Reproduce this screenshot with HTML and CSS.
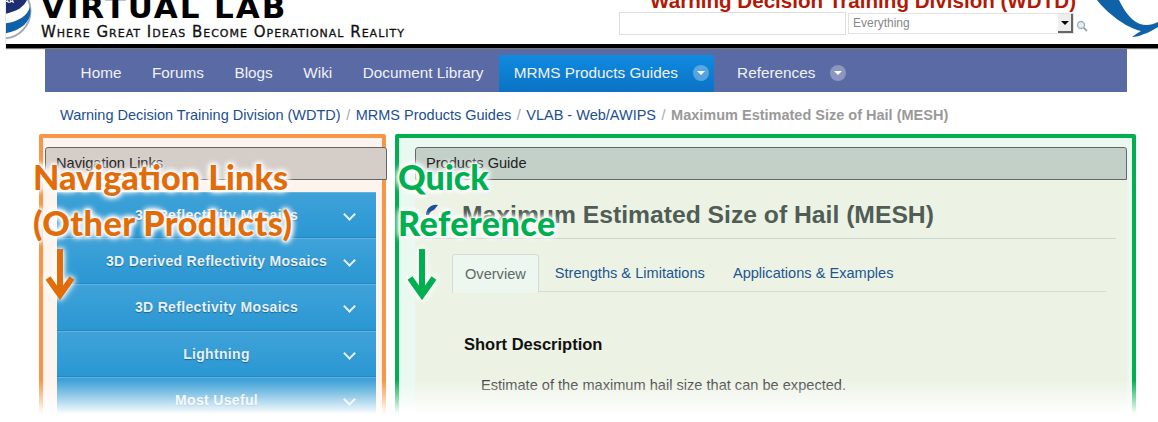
FILE: index.html
```html
<!DOCTYPE html>
<html lang="en">
<head>
    <meta charset="UTF-8">
    <title>Maximum Estimated Size of Hail (MESH)</title>
    <link rel="stylesheet" href="styles.css">
</head>
<body>

    <header class="top">
        <div class="brand">
            <svg class="noaa" width="28" height="44" viewBox="0 0 28 44">
                <circle cx="-3" cy="11" r="27.5" fill="#fff" stroke="#a3adb8" stroke-width="2"/>
                <path d="M-6 0 H21 C17 8 10 12 -6 15 Z" fill="#1d2f73"/>
                <path d="M24 7 C27 20 16 32 -6 34 L-6 24 C10 23 21 17 24 7 Z" fill="#0f62a8"/>
                <text class="noaa-text" x="-2" y="3">AA</text>
            </svg>
            <div class="brand-text">
                <div class="brand-name">VIRTUAL LAB</div>
                <div class="brand-tag">Where great ideas become operational reality</div>
            </div>
        </div>
        <div class="org">
            <div class="org-name">Warning Decision Training Division (WDTD)</div>
            <div class="search">
                <input class="search-box" type="text">
                <div class="search-select">
                    <span>Everything</span>
                    <i class="select-btn"></i>
                </div>
                <svg class="search-icon" width="12" height="12" viewBox="0 0 12 12">
                    <circle cx="5" cy="5" r="3.5" fill="#e4edf2" stroke="#9fb2bd" stroke-width="1.3"/>
                    <path d="M7.6 7.6 L11 11" stroke="#9aa5ab" stroke-width="1.8"/>
                </svg>
            </div>
        </div>
        <svg class="bird" width="62" height="44" viewBox="0 0 62 44">
            <path d="M1 0 H23 C28 10 34 20 44 24 C50 26 56 25 62 22 V27 C57 30 52 33 48 34 C44 36 40 37 36 37 C40 34 43 32 45 31 C30 28 10 12 1 0 Z" fill="#0f62a8"/>
        </svg>
    </header>

    <nav class="nav">
        <a href="#">Home</a>
        <a href="#">Forums</a>
        <a href="#">Blogs</a>
        <a href="#">Wiki</a>
        <a href="#">Document Library</a>
        <a href="#" class="active">MRMS Products Guides <i class="caret"></i></a>
        <a href="#">References <i class="caret"></i></a>
    </nav>

    <div class="crumbs">
        <a href="#">Warning Decision Training Division (WDTD)</a><span>/</span><a href="#">MRMS Products Guides</a><span>/</span><a href="#">VLAB - Web/AWIPS</a><span>/</span><b>Maximum Estimated Size of Hail (MESH)</b>
    </div>

    <div class="columns">
        <section class="box box-orange">
            <div class="portlet-title title-nav">Navigation Links</div>
            <ul class="menu">
                <li>3D Reflectivity Mosaics</li>
                <li>3D Derived Reflectivity Mosaics</li>
                <li>3D Reflectivity Mosaics</li>
                <li>Lightning</li>
                <li>Most Useful</li>
            </ul>
            <div class="callout callout-orange">
                <div class="callout-text">Navigation Links<br><span class="callout-wide">(Other Products)</span></div>
                <svg class="callout-arrow" width="30" height="52" viewBox="0 0 30 52">
                    <path d="M15 1 V46 M3 30 L15 47 L27 30" fill="none" stroke="#e36c0a" stroke-width="6"/>
                </svg>
            </div>
        </section>

        <section class="box box-green">
            <div class="portlet-title title-guide">Products Guide</div>
            <div class="guide">
                <h1 class="guide-title">
                    <svg class="guide-icon" width="24" height="24" viewBox="0 0 24 24">
                        <path d="M2 12 A10 10 0 0 1 14 2 L10 7 A7 7 0 0 0 5 12 Z" fill="#1d4f96"/>
                    </svg>
                    Maximum Estimated Size of Hail (MESH)
                </h1>
                <div class="tabs">
                    <a href="#" class="tab-on">Overview</a>
                    <a href="#">Strengths &amp; Limitations</a>
                    <a href="#">Applications &amp; Examples</a>
                </div>
                <h2 class="short-head">Short Description</h2>
                <p class="short-text">Estimate of the maximum hail size that can be expected.</p>
            </div>
            <div class="callout callout-green">
                <div class="callout-text">Quick<br><span class="callout-wide">Reference</span></div>
                <svg class="callout-arrow" width="30" height="52" viewBox="0 0 30 52">
                    <path d="M15 1 V46 M3 30 L15 47 L27 30" fill="none" stroke="#00b050" stroke-width="6"/>
                </svg>
            </div>
        </section>
    </div>

    <div class="fade"></div>

</body>
</html>
```

FILE: styles.css
```css
/* General Reset */
* {
    margin: 0;
    padding: 0;
    box-sizing: border-box;
}

html, body {
    height: 422px;
    overflow: hidden;
}

body {
    font-family: 'Liberation Sans', sans-serif;
    background-color: #fff;
    color: #333;
    font-size: 15px;
    position: relative;
}

a {
    text-decoration: none;
}

/* Header */
.top {
    height: 48px;
    margin-left: 6px;
    border-bottom: 4px solid #000;
    box-shadow: 0 1px 1px #777;
    display: flex;
    justify-content: space-between;
    overflow: hidden;
    position: relative;
}

.brand {
    display: flex;
    gap: 7px;
}

.noaa {
    flex: none;
}

.noaa-text {
    font-size: 7px;
    font-weight: bold;
    fill: #fff;
}

.brand-name {
    font-family: 'DejaVu Sans', sans-serif;
    font-size: 31px;
    line-height: 30px;
    height: 24px;
    font-weight: bold;
    letter-spacing: 1.9px;
    color: #000;
    margin-top: -8px;
    white-space: nowrap;
}

.brand-tag {
    font-family: 'DejaVu Sans', sans-serif;
    font-size: 15px;
    font-variant: small-caps;
    text-transform: capitalize;
    letter-spacing: 1px;
    -webkit-text-stroke: 0.3px #111;
    color: #111;
    line-height: 16px;
    margin-top: 8px;
    white-space: nowrap;
}

.org {
    margin-left: auto;
    margin-right: 7px;
    width: 470px;
}

.org-name {
    color: #b01a06;
    font-size: 20.6px;
    font-weight: bold;
    line-height: 20px;
    height: 12px;
    margin-top: -9px;
    margin-bottom: 9px;
    padding-left: 31px;
    white-space: nowrap;
}

.search {
    display: flex;
    align-items: center;
}

.search-box {
    width: 227px;
    height: 23px;
    border: 1px solid #ddd;
    background-color: #fff;
}

.search-select {
    width: 226px;
    height: 21px;
    margin-left: 2px;
    border: 1px solid #e2e2e2;
    font-size: 12px;
    color: #888;
    padding-left: 4px;
    line-height: 18px;
    display: flex;
    justify-content: space-between;
}

.select-btn {
    width: 15px;
    height: 19px;
    background-color: #eee;
    border-right: 2px solid #666;
    border-bottom: 2px solid #666;
    position: relative;
}

.select-btn::after {
    content: "";
    position: absolute;
    left: 3px;
    top: 7px;
    border-left: 4px solid transparent;
    border-right: 4px solid transparent;
    border-top: 4px solid #000;
}

.search-icon {
    margin: 4px 0 0 2px;
}

.bird {
    flex: none;
}

/* Nav bar */
.nav {
    margin: 1px 31px 0 45px;
    height: 43px;
    background-color: #5a6aa5;
    display: flex;
    padding: 6px 0 0 20.3px;
}

.nav a {
    color: #f0f2f8;
    font-size: 15.3px;
    line-height: 35px;
    padding: 0 15.3px 2px;
    display: flex;
    align-items: center;
    gap: 15px;
}

.nav a.active {
    background: linear-gradient(#0f8be0, #0b72c4);
    width: 215px;
    padding: 0 0 2px 15px;
    margin-right: 8px;
}

.caret {
    width: 16px;
    height: 16px;
    border-radius: 50%;
    background-color: rgba(255, 255, 255, 0.3);
    position: relative;
}

.caret::after {
    content: "";
    position: absolute;
    left: 4px;
    top: 6px;
    border-left: 4px solid transparent;
    border-right: 4px solid transparent;
    border-top: 4px solid #fff;
}

/* Breadcrumbs */
.crumbs {
    margin: 14px 0 0 60px;
    font-size: 14.5px;
    line-height: 18px;
    color: #1c4f8f;
    white-space: nowrap;
}

.crumbs a {
    color: #1c4f8f;
}

.crumbs span {
    color: #aaa;
    padding: 0 5.5px;
}

.crumbs b {
    color: #999;
}

/* Columns */
.columns {
    display: flex;
    gap: 9px;
    margin: 10px 22px 0 39px;
    height: 300px;
}

.box {
    border: 4px solid;
    border-radius: 2px;
    padding: 9px 4px 0 2px;
    position: relative;
}

.box-orange {
    width: 347px;
    border-color: #f79646;
    background-color: #fef4ee;
}

.box-green {
    flex: 1;
    border-color: #00b050;
    background-color: #e9f8f0;
    padding: 9px 5px 0 16px;
}

.portlet-title {
    height: 33px;
    border: 1px solid #666;
    border-radius: 3px 3px 0 0;
    font-size: 14.6px;
    line-height: 31px;
    padding-left: 10px;
    color: #222;
}

.title-nav {
    background-color: #d5cdc8;
    margin-right: -9px;
}

.title-guide {
    background-color: #c3d0c8;
}

/* Left menu */
.menu {
    list-style: none;
    margin: 12px 2px 0 12px;
}

.menu li {
    height: 46.2px;
    background: linear-gradient(#3fa2d8, #2a97d3);
    border-top: 1px solid #5db2e0;
    border-bottom: 1px solid #2a87bd;
    color: #e6f1f8;
    font-size: 14px;
    font-weight: bold;
    text-shadow: 0 1px 1px rgba(0, 0, 0, 0.35);
    letter-spacing: 0.33px;
    line-height: 45.5px;
    text-align: center;
    position: relative;
}

.menu li::after {
    content: "";
    position: absolute;
    right: 22px;
    top: 17px;
    width: 7px;
    height: 7px;
    border-right: 2px solid #e6f1f8;
    border-bottom: 2px solid #e6f1f8;
    transform: rotate(45deg);
}

/* Guide content */
.guide {
    background-color: #ecf3e5;
    height: 258px;
    padding: 0 11px 0 17px;
}

.guide-title {
    font-size: 24.7px;
    line-height: 30px;
    color: #505d56;
    padding: 20px 0 8px 0;
    border-bottom: 1px solid #cdd6cd;
    display: flex;
    gap: 14px;
    align-items: center;
    margin-left: -8px;
}

.guide-icon {
    flex: none;
}

.tabs {
    display: flex;
    margin: 15px 10px 0 20px;
    border-bottom: 1px solid #d3ddd6;
    height: 38px;
}

.tabs a {
    font-size: 14.6px;
    line-height: 38px;
    color: #1c5590;
    padding: 0 14px;
}

.tabs a.tab-on {
    color: #5d6a64;
    background-color: #edf7f0;
    border: 1px solid #d3ddd6;
    border-bottom: none;
    border-radius: 3px 3px 0 0;
    height: 39px;
    padding: 0 12px;
    margin-right: 2px;
}

.short-head {
    font-size: 16.5px;
    line-height: 20px;
    color: #111;
    margin: 42px 0 0 32px;
}

.short-text {
    font-size: 14.6px;
    line-height: 20px;
    color: #444;
    margin: 21px 0 0 49px;
}

/* Annotation labels, lying over the page */
.callout {
    position: absolute;
    font-family: 'Lato', sans-serif;
    font-weight: 900;
    font-size: 34.2px;
    line-height: 46px;
    white-space: nowrap;
}

.callout-orange {
    left: -10px;
    top: 16px;
    color: #e36c0a;
}

.callout-green {
    left: -1px;
    top: 16px;
    color: #00b050;
}

.callout-wide {
    letter-spacing: 0.4px;
}

.callout-text {
    text-shadow: 0 0 3px #fff, 0 0 3px #fff, 0 0 3px #fff, 0 0 6px #fff, 0 0 6px #fff, 0 0 6px #fff, 0 0 9px #fff;
}

.callout-arrow {
    display: block;
    margin: 2px 0 0 12px;
    filter: drop-shadow(0 0 2px #fff) drop-shadow(0 0 3px #fff);
}

.callout-green .callout-arrow {
    margin-left: 9px;
}

/* White fade at the bottom edge */
.fade {
    position: absolute;
    left: 0;
    right: 0;
    top: 380px;
    height: 34px;
    background: linear-gradient(rgba(255, 255, 255, 0), #fff);
}

.fade::after {
    content: "";
    display: block;
    height: 8px;
    margin-top: 34px;
    background-color: #fff;
}
```
